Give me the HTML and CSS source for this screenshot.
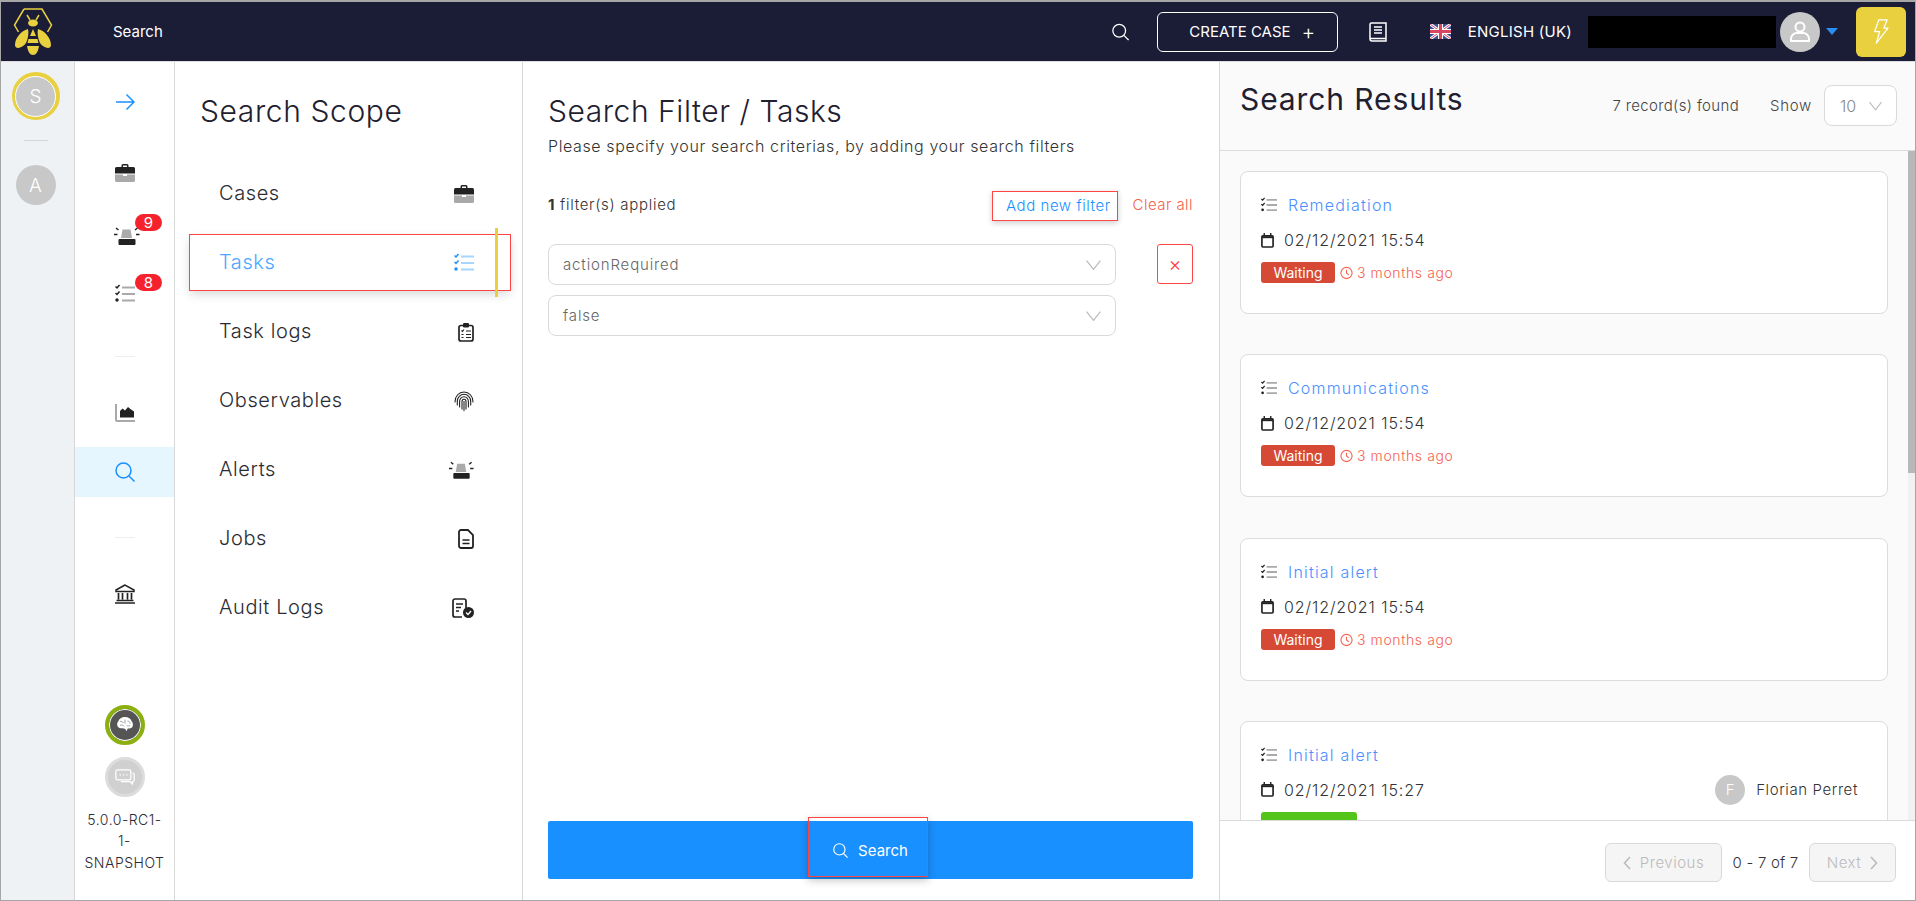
FILE: index.html
```html
<!DOCTYPE html>
<html lang="en">
<head>
<meta charset="utf-8">
<title>Search</title>
<link rel="stylesheet" href="styles.css">
</head>
<body>
<svg class="defs" width="0" height="0" aria-hidden="true">
  <symbol id="i-case" viewBox="0 0 20 20">
    <path d="M6.5 4V2.5A1.5 1.5 0 0 1 8 1h4a1.5 1.5 0 0 1 1.5 1.5V4H12V2.5H8V4z" fill="#222"/>
    <path d="M1.5 4h17A1.5 1.5 0 0 1 20 5.500V10.500H0V5.500A1.500 1.500 0 0 1 1.500 4z" fill="#222"/>
    <path d="M0 11.500h8V13h4v-1.500h8V17.500A1.500 1.500 0 0 1 18.500 19h-17A1.500 1.500 0 0 1 0 17.500z" fill="#a9a9a9"/>
  </symbol>
  <symbol id="i-tasks" viewBox="0 0 20 20">
    <path d="M0.500 2.500l1.500 1.500 2.500-3M0.500 9l1.500 1.500 2.500-3" fill="none" stroke="currentColor" stroke-width="1.500"/>
    <circle cx="2" cy="16" r="1.700" fill="currentColor"/>
    <path d="M7 3.500h13M7 10h13M7 16.500h13" fill="none" stroke="var(--line,#aaa)" stroke-width="2.200"/>
  </symbol>
  <symbol id="i-alert" viewBox="0 0 26 20">
    <path d="M7 12l1.500-8.500h8L18 12z" fill="#aaa"/>
    <rect x="4.500" y="13" width="17" height="6" rx="1" fill="#222"/>
    <path d="M0 8.500h3.500M22 8.500h3.500M2 2l2.500 2M23.500 2L21 4" fill="none" stroke="#222" stroke-width="1.500"/>
  </symbol>
  <symbol id="i-clip" viewBox="0 0 16 20">
    <rect x="1" y="3.500" width="14" height="15.500" rx="2" fill="none" stroke="#222" stroke-width="1.700"/>
    <rect x="5" y="1" width="6" height="4.500" rx="1.200" fill="#222"/>
    <path d="M3.500 8.500l1 1 1.500-2M8 9h5M3.500 12.500h2M8 12.500h5M3.500 15.500h2M8 15.500h5" fill="none" stroke="#222" stroke-width="1.100"/>
  </symbol>
  <symbol id="i-finger" viewBox="0 0 20 20">
    <g fill="none" stroke="#222" stroke-width="1.100" stroke-linecap="round">
      <path d="M1 11C1 5 5 1 10 1s9 4 9 10"/>
      <path d="M3.300 14V10.500C3.300 6.500 6.300 3.300 10 3.300s6.700 3.200 6.700 7.200V14"/>
      <path d="M5.600 16V10.500C5.600 8 7.600 5.800 10 5.800s4.400 2.200 4.400 4.700V16"/>
      <path d="M8 18V10.500C8 9.300 8.900 8.300 10 8.300s2 1 2 2.200V18"/>
      <path d="M10 10.500V20"/>
    </g>
  </symbol>
  <symbol id="i-doc" viewBox="0 0 16 20">
    <path d="M1 3a2 2 0 0 1 2-2h7l5 5v11a2 2 0 0 1-2 2H3a2 2 0 0 1-2-2z" fill="none" stroke="#222" stroke-width="1.800"/>
    <path d="M4.500 11h7M4.500 14.500h7" stroke="#222" stroke-width="1.500"/>
  </symbol>
  <symbol id="i-audit" viewBox="0 0 22 20">
    <path d="M14 10V3a2 2 0 0 0-2-2H3a2 2 0 0 0-2 2v14a2 2 0 0 0 2 2h7" fill="none" stroke="#222" stroke-width="1.700"/>
    <path d="M4 6h7M4 9.500h5M4 13h3" stroke="#222" stroke-width="1.500"/>
    <circle cx="16.500" cy="14.500" r="5.500" fill="#222"/>
    <path d="M14 14.500l2 2 3-3.500" fill="none" stroke="#fff" stroke-width="1.300"/>
  </symbol>
  <symbol id="i-chart" viewBox="0 0 20 20">
    <path d="M1 1v16a1 1 0 0 0 1 1h18" fill="none" stroke="#a9a9a9" stroke-width="2"/>
    <path d="M5 14.500V8l2.500-2.500L10 7.500 13 4l3 2.500 3 2V14.500z" fill="#222"/>
  </symbol>
  <symbol id="i-search" viewBox="0 0 20 20">
    <circle cx="8.500" cy="8.500" r="7.500" fill="none" stroke="currentColor" stroke-width="1.500"/>
    <path d="M14 14l5.500 5.500" stroke="currentColor" stroke-width="1.500"/>
  </symbol>
  <symbol id="i-bank" viewBox="0 0 20 20">
    <path d="M10 1L1 6v1.500h18V6z" fill="none" stroke="#222" stroke-width="1.500"/>
    <path d="M3.500 9v6.500M7.500 9v6.500M12.500 9v6.500M16.500 9v6.500M1.500 16.500h17M0 19h20" stroke="#222" stroke-width="1.700"/>
  </symbol>
  <symbol id="i-chev" viewBox="0 0 12 8">
    <path d="M0.500 0.500L6 7.500 11.500 0.500" fill="none" stroke="currentColor" stroke-width="1"/>
  </symbol>
  <symbol id="i-cal" viewBox="0 0 14 16">
    <path d="M3.500 0v3M10.500 0v3" stroke="#222" stroke-width="1.500"/>
    <rect x="1" y="3" width="12" height="12" rx="1" fill="none" stroke="#222" stroke-width="1.800"/>
    <path d="M1 4.500h12" stroke="#222" stroke-width="2"/>
  </symbol>
  <symbol id="i-clock" viewBox="0 0 14 14">
    <circle cx="7" cy="7" r="6" fill="none" stroke="currentColor" stroke-width="1.200"/>
    <path d="M7 3.500V7l2.500 2" fill="none" stroke="currentColor" stroke-width="1.100"/>
  </symbol>
</svg>

<div class="page">
  <header class="topbar">
    <svg class="logo" viewBox="0 0 40 48" aria-label="TheHive logo">
      <path d="M11 1h18l9.500 16-4 7M5.500 24l-4-7L11 1" fill="none" stroke="#e8d03f" stroke-width="1.500"/>
      <path d="M14 7l3 5M26 7l-3 5" stroke="#e8d03f" stroke-width="1.500"/>
      <ellipse cx="20" cy="15" rx="5" ry="3.500" fill="#e8d03f"/>
      <path d="M15 21C8 23 2 30 2 37c0 5 8 3 11-2 2-4 3-10 2-14zM25 21c7 2 13 9 13 16 0 5-8 3-11-2-2-4-3-10-2-14z" fill="#e8d03f"/>
      <path d="M20 21l3 7h-6zM15.500 31h9l1 4h-11zM14 38h12c-1 6-3 9-6 9s-5-3-6-9z" fill="#e8d03f"/>
    </svg>
    <span class="crumb">Search</span>
    <svg class="top-search"><use href="#i-search"/></svg>
    <button class="create">CREATE CASE<span class="plus">+</span></button>
    <svg class="book" viewBox="0 0 18 20" aria-hidden="true">
      <path d="M1 16V2.500A1.500 1.500 0 0 1 2.500 1H17v18H3a2 2 0 0 1-2-2z" fill="none" stroke="#fff" stroke-width="1.500"/>
      <path d="M1 16.500h16" stroke="#fff" stroke-width="1.500"/>
      <path d="M5 5h8M5 8h8M5 11h8" stroke="#fff" stroke-width="1.500"/>
    </svg>
    <svg class="flag" viewBox="0 0 21 15" aria-hidden="true">
      <rect width="21" height="15" fill="#3f4f94"/>
      <path d="M0 0l21 15M21 0L0 15" stroke="#fff" stroke-width="3"/>
      <path d="M0 0l21 15M21 0L0 15" stroke="#d8475f" stroke-width="1"/>
      <path d="M10.500 0v15M0 7.500h21" stroke="#fff" stroke-width="5"/>
      <path d="M10.500 0v15M0 7.500h21" stroke="#d8475f" stroke-width="3"/>
    </svg>
    <span class="lang">ENGLISH (UK)</span>
    <span class="redacted"></span>
    <span class="user-avatar">
      <svg viewBox="0 0 40 40" aria-hidden="true">
        <circle cx="20" cy="15" r="4.500" fill="none" stroke="#fff" stroke-width="2"/>
        <path d="M11 29v-2a6 6 0 0 1 6-6h6a6 6 0 0 1 6 6v2z" fill="none" stroke="#fff" stroke-width="2"/>
      </svg>
    </span>
    <span class="caret"></span>
    <span class="bolt">
      <svg viewBox="0 0 20 30" aria-hidden="true">
        <path d="M8 1h10l-4 10h5L5 29l4-14H3z" fill="none" stroke="#fff" stroke-width="1.500" stroke-linejoin="round"/>
      </svg>
    </span>
  </header>

  <div class="workspace">
    <aside class="rail">
      <span class="org org-current"><span class="org-in">S</span></span>
      <span class="rail-rule"></span>
      <span class="org">A</span>
    </aside>

    <nav class="nav">
      <div class="nav-item nav-arrow">
        <svg class="nav-icon arrow" viewBox="0 0 20 20" aria-hidden="true"><path d="M1 10h18M11.500 2.500L19 10l-7.500 7.500" fill="none" stroke="#1890ff" stroke-width="1.500"/></svg>
      </div>
      <div class="nav-group">
        <div class="nav-item"><svg class="nav-icon"><use href="#i-case"/></svg></div>
        <div class="nav-item"><svg class="nav-icon alert-n"><use href="#i-alert"/></svg><span class="badge">9</span></div>
        <div class="nav-item"><svg class="nav-icon tasks-n dark"><use href="#i-tasks"/></svg><span class="badge">8</span></div>
      </div>
      <span class="nav-rule"></span>
      <div class="nav-group nav-group-tight">
        <div class="nav-item"><svg class="nav-icon"><use href="#i-chart"/></svg></div>
        <div class="nav-item nav-active"><svg class="nav-icon blue"><use href="#i-search"/></svg></div>
      </div>
      <span class="nav-rule"></span>
      <div class="nav-item"><svg class="nav-icon"><use href="#i-bank"/></svg></div>
      <div class="nav-foot">
        <span class="status status-on">
          <svg viewBox="0 0 24 20" aria-hidden="true">
            <path d="M4 6c1-3 4-5 8-5s7 2 8 5c2 2 2 6 0 8-2 1-4 1-5 1l-1 3-2-3c-2 0-5 0-7-1-3-2-3-6-1-8z" fill="#fff"/>
            <path d="M6 6c2 1 3 0 4 2M12 4v5M15 6c2 0 3 1 3 3M6 11c2-1 4 0 5 1M14 11c1 1 3 1 4 0" fill="none" stroke="#777" stroke-width=".8"/>
          </svg>
        </span>
        <span class="status status-off">
          <svg viewBox="0 0 24 20" aria-hidden="true">
            <rect x="1" y="2" width="18" height="12" rx="2" fill="none" stroke="#fff" stroke-width="1.500"/>
            <path d="M21 6a2 2 0 0 1 2 2v6a2 2 0 0 1-2 2v3l-3-3H7" fill="none" stroke="#fff" stroke-width="1.500"/>
            <path d="M5.500 8h1.500M9.500 8h1.500M13.500 8h1.500" stroke="#fff" stroke-width="1.500"/>
          </svg>
        </span>
        <p class="version">5.0.0-RC1-1-SNAPSHOT</p>
      </div>
    </nav>

    <section class="scope">
      <h2 class="scope-title">Search Scope</h2>
      <ul class="scope-list">
        <li class="scope-item">Cases<svg class="s-icon"><use href="#i-case"/></svg></li>
        <li class="scope-item scope-selected">Tasks<svg class="s-icon blue light-line"><use href="#i-tasks"/></svg><span class="scope-bar"></span></li>
        <li class="scope-item">Task logs<svg class="s-icon s-narrow"><use href="#i-clip"/></svg></li>
        <li class="scope-item">Observables<svg class="s-icon"><use href="#i-finger"/></svg></li>
        <li class="scope-item">Alerts<svg class="s-icon s-wide"><use href="#i-alert"/></svg></li>
        <li class="scope-item">Jobs<svg class="s-icon s-narrow"><use href="#i-doc"/></svg></li>
        <li class="scope-item">Audit Logs<svg class="s-icon s-audit"><use href="#i-audit"/></svg></li>
      </ul>
    </section>

    <section class="filters">
      <h2 class="filter-title">Search Filter / Tasks</h2>
      <p class="filter-sub">Please specify your search criterias, by adding your search filters</p>
      <div class="applied">
        <span class="applied-count"><b>1</b> filter(s) applied</span>
        <a class="add-filter">Add new filter</a>
        <a class="clear-all">Clear all</a>
      </div>
      <div class="filter-row">
        <div class="filter-fields">
          <div class="select"><span class="select-text">actionRequired</span><svg class="chev"><use href="#i-chev"/></svg></div>
          <div class="select"><span class="select-text">false</span><svg class="chev"><use href="#i-chev"/></svg></div>
        </div>
        <button class="remove">×</button>
      </div>
      <button class="search-btn">
        <span class="search-mark"></span>
        <svg class="search-btn-icon"><use href="#i-search"/></svg>Search
      </button>
    </section>

    <section class="results">
      <div class="results-head">
        <h2 class="results-title">Search Results</h2>
        <div class="results-tools">
          <span class="count">7 record(s) found</span>
          <span class="show">Show</span>
          <div class="page-size">10<svg class="chev"><use href="#i-chev"/></svg></div>
        </div>
      </div>
      <div class="results-scroll">
        <span class="scroll-thumb"></span>
        <article class="card">
          <div class="card-title"><svg class="card-task dark"><use href="#i-tasks"/></svg><a>Remediation</a></div>
          <div class="card-date"><svg class="cal"><use href="#i-cal"/></svg>02/12/2021 15:54</div>
          <div class="card-status"><span class="pill">Waiting</span><svg class="clock"><use href="#i-clock"/></svg><span class="ago">3 months ago</span></div>
        </article>
        <article class="card">
          <div class="card-title"><svg class="card-task dark"><use href="#i-tasks"/></svg><a>Communications</a></div>
          <div class="card-date"><svg class="cal"><use href="#i-cal"/></svg>02/12/2021 15:54</div>
          <div class="card-status"><span class="pill">Waiting</span><svg class="clock"><use href="#i-clock"/></svg><span class="ago">3 months ago</span></div>
        </article>
        <article class="card">
          <div class="card-title"><svg class="card-task dark"><use href="#i-tasks"/></svg><a>Initial alert</a></div>
          <div class="card-date"><svg class="cal"><use href="#i-cal"/></svg>02/12/2021 15:54</div>
          <div class="card-status"><span class="pill">Waiting</span><svg class="clock"><use href="#i-clock"/></svg><span class="ago">3 months ago</span></div>
        </article>
        <article class="card">
          <div class="card-title"><svg class="card-task dark"><use href="#i-tasks"/></svg><a>Initial alert</a></div>
          <div class="card-date"><svg class="cal"><use href="#i-cal"/></svg>02/12/2021 15:27
            <span class="assignee"><span class="assignee-pic">F</span>Florian Perret</span>
          </div>
          <div class="card-status"><span class="pill pill-green"></span></div>
        </article>
      </div>
      <div class="results-foot">
        <button class="pager pager-prev" disabled><svg class="pager-chev" viewBox="0 0 8 14" aria-hidden="true"><path d="M7 1L1.500 7 7 13" fill="none" stroke="currentColor" stroke-width="1.600"/></svg>Previous</button>
        <span class="range">0 - 7 of 7</span>
        <button class="pager pager-next" disabled>Next<svg class="pager-chev" viewBox="0 0 8 14" aria-hidden="true"><path d="M1 1l5.500 6L1 13" fill="none" stroke="currentColor" stroke-width="1.600"/></svg></button>
      </div>
    </section>
  </div>
</div>
</body>
</html>
```

FILE: styles.css
```css
* { box-sizing: border-box; }
html, body { margin: 0; height: 100%; overflow: hidden; }
body { font-family: Inter, "Noto Sans", sans-serif; font-weight: 300; color: #2b2b33; background: #fff; }
h2, p, ul { margin: 0; padding: 0; list-style: none; font-weight: 300; }
button { font-family: inherit; font-weight: 300; }
.defs { position: absolute; }

.page { display: flex; flex-direction: column; width: 1916px; height: 901px; border: 1px solid #a6a6a6; border-top-width: 2px; }

/* top bar */
.topbar { display: flex; align-items: center; height: 60px; flex: none; background: #1b1c36; border-bottom: 1px solid #ddd; color: #fff; padding-left: 12px; }
.logo { width: 40px; height: 48px; flex: none; }
.crumb { margin-left: 60px; font-size: 15px; font-weight: 400; }
.top-search { width: 17px; height: 18px; margin-left: 949px; color: #fff; }
.create { width: 181px; height: 40px; margin-left: 28px; background: transparent; border: 1px solid #fff; border-radius: 6px; color: #fff; font-size: 15px; font-weight: 400; display: flex; align-items: center; justify-content: center; padding: 0 0 0 10px; }
.plus { font-size: 21px; font-weight: 300; margin-left: 11px; line-height: 1; }
.book { width: 18px; height: 20px; margin-left: 31px; }
.flag { width: 21px; height: 15px; margin-left: 43px; }
.lang { margin-left: 17px; font-size: 15px; font-weight: 400; letter-spacing: .25px; white-space: nowrap; width: 105px; }
.redacted { width: 188px; height: 32px; margin-left: 15px; background: #000; }
.user-avatar { width: 40px; height: 40px; margin-left: 4px; border-radius: 50%; background: #c8c8c8; }
.user-avatar svg { width: 40px; height: 40px; display: block; }
.caret { margin-left: 6px; border: 6px solid transparent; border-top: 7px solid #2a8ff0; border-bottom: 0; }
.bolt { display: flex; align-items: center; justify-content: center; width: 50px; height: 50px; margin-left: 18px; background: #e8d03f; border-radius: 6px; }
.bolt svg { width: 17px; height: 25px; }

.workspace { display: flex; flex: 1; min-height: 0; }

/* organisation rail */
.rail { display: flex; flex-direction: column; align-items: center; width: 74px; flex: none; background: #eef2f5; border-right: 1px solid #d8d8d8; padding: 10px 4px 0 0; }
.org { display: flex; align-items: center; justify-content: center; width: 40px; height: 40px; border-radius: 50%; background: #c8c8c8; color: #fff; font-size: 19px; }
.org-current { width: 48px; height: 48px; background: #e8d03f; }
.org-in { display: flex; align-items: center; justify-content: center; width: 41px; height: 41px; border-radius: 50%; background: #c8c8c8; border: 1px solid #fff; }
.rail-rule { width: 24px; height: 1px; background: #d5d5d5; margin: 20px 0 24px; }

/* nav column */
.nav { display: flex; flex-direction: column; align-items: stretch; width: 100px; flex: none; border-right: 1px solid #d8d8d8; padding-top: 15px; }
.nav-item { position: relative; display: flex; align-items: center; justify-content: center; height: 50px; flex: none; }
.nav-arrow { margin-bottom: 21px; }
.nav-group { display: flex; flex-direction: column; gap: 10px; }
.nav-group-tight { gap: 9px; margin-bottom: 2px; }
.nav-icon { width: 20px; height: 20px; }
.alert-n { width: 26px; transform: translate(2px, 3px); }
.tasks-n { transform: translateY(1px); }
.dark { color: #222; }
.blue { color: #1890ff; }
.nav-active { background: #e6f6ff; }
.badge { position: absolute; top: 6px; left: 60px; width: 27px; height: 17px; border-radius: 9px; background: #f5222d; color: #fff; font-size: 15px; font-weight: 400; line-height: 17px; text-align: center; }
.nav-rule { width: 20px; height: 1px; background: #eee; margin: 38px auto 31px; flex: none; }
.nav-foot { display: flex; flex-direction: column; align-items: center; margin-top: auto; padding-bottom: 27px; }
.status { display: flex; align-items: center; justify-content: center; width: 40px; height: 40px; border-radius: 50%; }
.status svg { width: 20px; height: 17px; }
.status-on { background: #555; border: 4px solid #8cb010; box-shadow: inset 0 0 0 1px #fff; }
.status-off { background: #d0d0d0; border: 3px solid #dcdcdc; margin-top: 12px; }
.version { margin-top: 12px; width: 84px; font-size: 14px; line-height: 21.500px; text-align: center; letter-spacing: .5px; }

/* scope column */
.scope { width: 348px; flex: none; border-right: 1px solid #d8d8d8; padding-top: 32px; }
.scope-title { font-size: 30px; line-height: 34px; margin-left: 25px; color: #1f2030; letter-spacing: .6px; }
.scope-list { display: flex; flex-direction: column; gap: 14px; margin: 38px 0 0 15px; width: 320px; }
.scope-item { position: relative; display: flex; align-items: center; justify-content: space-between; height: 55px; padding: 0 36px 2px 29px; font-size: 20px; letter-spacing: .6px; color: #2b2b33; }
.scope-selected { color: #4da6ff; outline: 1px solid #f44; outline-offset: 0; box-shadow: 0 4px 10px rgba(0,0,0,.16); }
.scope-bar { position: absolute; left: 305px; top: -7px; width: 3px; height: 69px; background: #e8d03f; }
.s-icon { width: 20px; height: 20px; transform: translateY(1px); }
.s-narrow { width: 16px; }
.s-wide { width: 25px; }
.s-audit { width: 22px; }
.light-line { --line: #a6d6ff; }

/* filter column */
.filters { display: flex; flex-direction: column; width: 697px; flex: none; border-right: 1px solid #d8d8d8; padding: 32px 26px 21px 25px; }
.filter-title { font-size: 30px; line-height: 34px; color: #1f2030; letter-spacing: .55px; }
.filter-sub { margin-top: 7px; font-size: 16px; line-height: 22px; letter-spacing: .62px; color: #333; }
.applied { display: flex; align-items: center; margin-top: 34px; font-size: 15px; }
.applied-count { margin-right: auto; padding-bottom: 3px; color: #333; letter-spacing: .7px; }
.applied-count b { font-weight: 700; }
.add-filter { display: flex; align-items: center; justify-content: flex-end; width: 126px; height: 30px; padding: 0 6px 2px 0; border: 1px solid #f44; box-shadow: 0 2px 6px rgba(0,0,0,.2); color: #1890ff; letter-spacing: .55px; }
.clear-all { margin-left: 15px; padding-bottom: 3px; color: #f5614d; letter-spacing: .45px; }
.filter-row { display: flex; justify-content: space-between; margin-top: 23px; }
.filter-fields { display: flex; flex-direction: column; gap: 10px; width: 568px; }
.select { display: flex; align-items: center; justify-content: space-between; height: 41px; padding: 0 14px; border: 1px solid #d9d9d9; border-radius: 8px; font-size: 15px; color: #666; }
.select-text { padding-bottom: 1px; letter-spacing: .85px; }
.chev { width: 15px; height: 10px; color: #bbb; }
.remove { width: 36px; height: 40px; background: #fff; border: 1px solid #f44; border-radius: 3px; color: #f44; font-size: 20px; padding: 0; line-height: 1; }
.search-btn { position: relative; display: flex; align-items: center; justify-content: center; gap: 10px; height: 58px; margin-top: auto; background: #1890ff; border: 0; border-radius: 2px; color: #fff; font-size: 15px; font-weight: 400; }
.search-btn-icon { width: 15px; height: 15px; color: #fff; }
.search-mark { position: absolute; left: 260px; top: -4px; width: 120px; height: 60px; border: 1px solid #f44; box-shadow: 0 3px 8px rgba(0,0,0,.25); }

/* results column */
.results { display: flex; flex-direction: column; flex: 1; min-width: 0; background: #fafafa; }
.results-head { display: flex; align-items: flex-start; height: 89px; flex: none; padding: 20px 18px 0 20px; border-bottom: 1px solid #dcdcdc; }
.results-title { font-size: 30px; line-height: 34px; color: #1f2030; font-weight: 400; letter-spacing: .9px; }
.results-tools { display: flex; align-items: center; margin-left: auto; margin-top: 3px; font-size: 15px; color: #444; }
.count { letter-spacing: .35px; }
.show { margin-left: 31px; letter-spacing: .7px; }
.page-size { display: flex; align-items: center; justify-content: space-between; width: 73px; height: 41px; margin-left: 12px; padding: 0 14px 0 15px; background: #fff; border: 1px solid #d9d9d9; border-radius: 8px; font-size: 16px; color: #888; }
.page-size .chev { width: 13px; }
.results-scroll { position: relative; flex: 1; min-height: 0; overflow: hidden; padding: 20px 27px 0 20px; background: linear-gradient(to right, transparent 688px, #f1f1f1 688px); }
.scroll-thumb { position: absolute; top: 0; right: 0; width: 7px; height: 322px; background: #b8b8b8; }
.card { height: 143px; margin-bottom: 40.330px; padding: 22px 20px 0; background: #fff; border: 1px solid #dcdcdc; border-radius: 8px; }
.card-title { display: flex; align-items: center; height: 22px; font-size: 16px; letter-spacing: 1.200px; }
.card-title a { color: #4a90ff; margin-left: 11px; }
.card-task { width: 16px; height: 18px; }
.card-date { display: flex; align-items: center; height: 26px; margin-top: 11px; font-size: 16px; letter-spacing: .9px; color: #333; }
.cal { width: 13px; height: 15px; margin-right: 10px; }
.card-status { display: flex; align-items: center; height: 21px; margin-top: 9px; }
.pill { width: 74px; height: 21px; line-height: 21px; text-align: center; background: #d64a35; border-radius: 3px; color: #fff; font-size: 14px; font-weight: 400; }
.pill-green { width: 96px; background: #52c41a; }
.clock { width: 13px; height: 14px; margin: 1px 4px 0 5px; color: #f5614d; }
.ago { color: #f5614d; font-size: 14px; letter-spacing: .6px; }
.assignee { display: flex; align-items: center; margin-left: auto; margin-right: 9px; font-size: 15px; letter-spacing: .6px; }
.assignee-pic { display: flex; align-items: center; justify-content: center; width: 30px; height: 30px; margin-right: 11px; border-radius: 50%; background: #c8c8c8; color: #fff; font-size: 15px; letter-spacing: 0; }
.results-foot { display: flex; align-items: center; justify-content: flex-end; height: 80px; flex: none; padding: 4px 19px 0 0; background: #fff; border-top: 1px solid #dcdcdc; }
.pager { display: flex; align-items: center; justify-content: center; gap: 9px; height: 39px; background: #f5f5f5; border: 1px solid #d9d9d9; border-radius: 6px; color: #bbb; font-size: 15px; letter-spacing: .5px; padding: 0; }
.pager-prev { width: 117px; }
.pager-next { width: 87px; }
.pager-chev { width: 8px; height: 14px; }
.range { width: 87px; text-align: center; font-size: 15px; letter-spacing: .2px; color: #333; }
```
